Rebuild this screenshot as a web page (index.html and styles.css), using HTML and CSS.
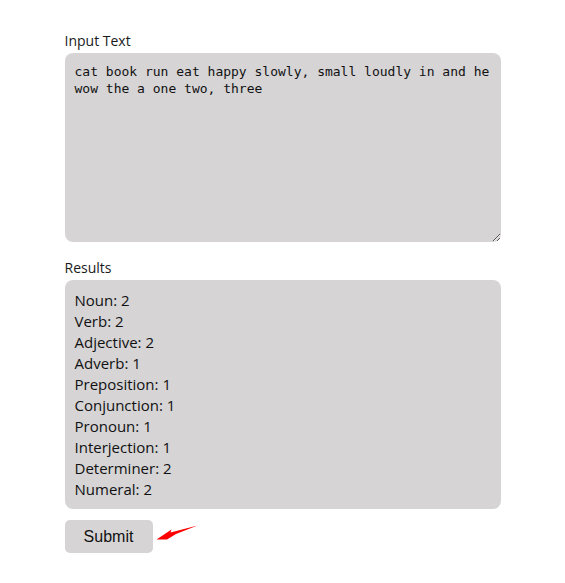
FILE: index.html
```html
<!DOCTYPE html>
<html>
<head>
<meta charset="utf-8">
<link rel="stylesheet" href="styles.css">
</head>
<body>
<div class="container">
  <label class="label label-input" for="input">Input Text</label>
  <textarea id="input" class="input">cat book run eat happy slowly, small loudly in and he wow the a one two, three</textarea>
  <div class="label label-results">Results</div>
  <div class="results">
    <div>Noun: 2</div>
    <div>Verb: 2</div>
    <div>Adjective: 2</div>
    <div>Adverb: 1</div>
    <div>Preposition: 1</div>
    <div>Conjunction: 1</div>
    <div>Pronoun: 1</div>
    <div>Interjection: 1</div>
    <div>Determiner: 2</div>
    <div>Numeral: 2</div>
  </div>
  <div class="actions">
    <button class="submit">Submit</button>
    <svg class="arrow" width="44" height="20" viewBox="0 0 44 20">
      <polygon points="1.5,17.5 16.5,7.5 15.5,10.5 42.5,3.5 21,12 12,17.5" fill="#ff0000"/>
    </svg>
  </div>
</div>
</body>
</html>
```
FILE: styles.css
```css
html, body {
  margin: 0;
  padding: 0;
  background: #ffffff;
}
body {
  font-family: "Open Sans", "Noto Sans", sans-serif;
  color: #111111;
}
.container {
  width: 436px;
  margin: 0 auto;
  padding-top: 31px;
  display: flex;
  flex-direction: column;
  align-items: flex-start;
}
.label {
  display: block;
  font-size: 14px;
  line-height: 20px;
  color: #1a1a1a;
}
.label-input {
  margin-bottom: 2px;
}
.label-results {
  margin-top: 16px;
  margin-bottom: 2px;
}
.input {
  display: block;
  box-sizing: border-box;
  width: 436px;
  height: 189px;
  margin: 0;
  padding: 10px;
  border: none;
  border-radius: 8px;
  background: #d6d4d5;
  font-family: "DejaVu Sans Mono", monospace;
  font-size: 13px;
  line-height: 17px;
  color: #111111;
  resize: vertical;
  outline: none;
}
.results {
  box-sizing: border-box;
  width: 436px;
  padding: 10px 10px 9px;
  border-radius: 8px;
  background: #d6d4d5;
  font-size: 15px;
  line-height: 21px;
}
.actions {
  margin-top: 11px;
  display: flex;
  align-items: flex-start;
}
.submit {
  width: 88px;
  height: 33px;
  border: none;
  border-radius: 5px;
  background: #d6d4d5;
  font-family: "Liberation Sans", Arial, sans-serif;
  font-size: 16px;
  color: #111111;
  padding: 0;
}
.arrow {
  margin-left: 2px;
  margin-top: 2px;
}
```
